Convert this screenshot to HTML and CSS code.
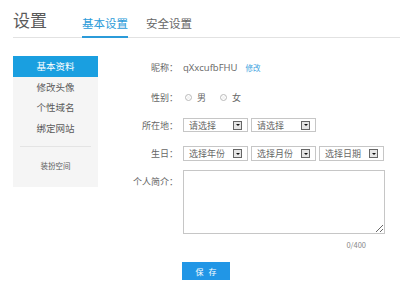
FILE: index.html
```html
<!DOCTYPE html>
<html lang="zh-CN">
<head>
  <meta charset="UTF-8">
  <title>设置</title>
  <link rel="stylesheet" href="styles.css">
</head>
<body>
  <div class="page">
    <div class="header">
      <h1 class="title">设置</h1>
      <a class="tab active">基本设置</a>
      <a class="tab">安全设置</a>
    </div>

    <div class="main">
      <ul class="sidebar">
        <li class="active">基本资料</li>
        <li>修改头像</li>
        <li>个性域名</li>
        <li>绑定网站</li>
        <li class="divider"></li>
        <li class="small">装扮空间</li>
      </ul>

      <div class="form">
        <div class="row row-name">
          <span class="label">昵称：</span>
          <span class="nick">qXxcufbFHU</span>
          <a class="edit">修改</a>
        </div>
        <div class="row row-sex">
          <span class="label">性别：</span>
          <span class="radio"></span><span class="opt">男</span>
          <span class="radio"></span><span class="opt">女</span>
        </div>
        <div class="row row-place">
          <span class="label">所在地：</span>
          <div class="select"><span>请选择</span><i class="arrow"></i></div>
          <div class="select"><span>请选择</span><i class="arrow"></i></div>
        </div>
        <div class="row row-birth">
          <span class="label">生日：</span>
          <div class="select"><span>选择年份</span><i class="arrow"></i></div>
          <div class="select"><span>选择月份</span><i class="arrow"></i></div>
          <div class="select"><span>选择日期</span><i class="arrow"></i></div>
        </div>
        <div class="row row-intro">
          <span class="label">个人简介：</span>
          <textarea class="intro"></textarea>
        </div>
        <div class="count">0/400</div>
        <div class="row row-save">
          <span class="label"></span>
          <button class="save">保存</button>
        </div>
      </div>
    </div>
  </div>
</body>
</html>
```

FILE: styles.css
```css
body {
  margin: 0;
  background: #fff;
  font-family: "Noto Sans CJK SC", "DejaVu Sans", sans-serif;
  color: #555;
}

.page {
  padding-left: 13px;
}

/* header with tabs */
.header {
  display: flex;
  align-items: flex-end;
  height: 38px;
  border-bottom: 1px solid #e2e2e2;
  box-sizing: border-box;
}

.title {
  margin: 0 35px 7px 0;
  font-size: 17px;
  font-weight: normal;
  line-height: 20px;
  color: #5a5a5a;
}

.tab {
  font-size: 11.5px;
  line-height: 14px;
  padding-bottom: 6px;
  margin-right: 18px;
  color: #666;
  border-bottom: 2px solid transparent;
  margin-bottom: -1px;
}

.tab.active {
  color: #2b9bd9;
  border-bottom-color: #2b9bd9;
}

.main {
  display: flex;
  margin-top: 18px;
}

/* left menu */
.sidebar {
  list-style: none;
  margin: 0;
  padding: 0 0 12px;
  width: 85px;
  background: #f5f5f5;
  height: 131px;
  box-sizing: border-box;
}

.sidebar li {
  height: 20.5px;
  line-height: 20px;
  text-align: center;
  font-size: 9.5px;
  color: #5a5a5a;
}

.sidebar li.active {
  background: #1a9fe0;
  color: #fff;
}

.sidebar li.divider {
  height: 1px;
  margin: 8px 7px 9px;
  background: #e4e4e4;
}

.sidebar li.small {
  font-size: 7.5px;
}

/* form */
.form {
  margin-left: 32px;
  font-size: 9px;
}

.row {
  display: flex;
  align-items: center;
}

.label {
  width: 48px;
  margin-right: 5px;
  text-align: right;
  color: #666;
  flex: none;
}

.row-name {
  height: 16px;
  margin-top: 3px;
}

.nick {
  font-family: "Open Sans", "DejaVu Sans", sans-serif;
  font-size: 9.5px;
  color: #666;
}

.edit {
  margin-left: 8px;
  font-size: 7.5px;
  color: #3a9fe0;
}

.row-sex {
  height: 16px;
  margin-top: 14px;
}

.radio {
  width: 5px;
  height: 5px;
  border: 1px solid #bbb;
  border-radius: 50%;
  margin: 0 5px 0 2px;
  background: #f3f3f3;
  box-shadow: inset 0 0 0 1px #fff;
}

.opt {
  margin-right: 12px;
  color: #666;
}

.row-place {
  margin-top: 13px;
}

.row-birth {
  margin-top: 14px;
}

.select {
  display: flex;
  align-items: center;
  justify-content: space-between;
  width: 65px;
  height: 14px;
  border: 1px solid #c6c6c6;
  box-sizing: border-box;
  padding: 0 5px 0 5px;
  margin-right: 3px;
  color: #666;
  font-size: 9px;
}

.row-birth .select {
  height: 15px;
}

.arrow {
  position: relative;
  width: 7px;
  height: 7px;
  border: 1px solid #666;
  background: #e6e6e6;
}

.arrow::after {
  content: "";
  position: absolute;
  left: 1.5px;
  top: 2.5px;
  border-left: 2px solid transparent;
  border-right: 2px solid transparent;
  border-top: 2.5px solid #111;
}

.row-intro {
  align-items: flex-start;
  margin-top: 9px;
}

.row-intro .label {
  margin-top: 5px;
}

.intro {
  width: 202px;
  height: 64px;
  border: 1px solid #c6c6c6;
  box-sizing: border-box;
  margin: 0;
  padding: 3px;
  resize: both;
  font-family: inherit;
}

.count {
  width: 236px;
  margin-top: 5px;
  text-align: right;
  font-size: 7.5px;
  color: #888;
}

.row-save {
  margin-top: 12px;
}

.row-save .label {
  margin-right: 4px;
}

.save {
  width: 48px;
  height: 18px;
  border: none;
  padding: 0 0 0 5px;
  background: #2196e6;
  color: #fff;
  font-family: inherit;
  font-size: 8px;
  letter-spacing: 5px;
}
```
